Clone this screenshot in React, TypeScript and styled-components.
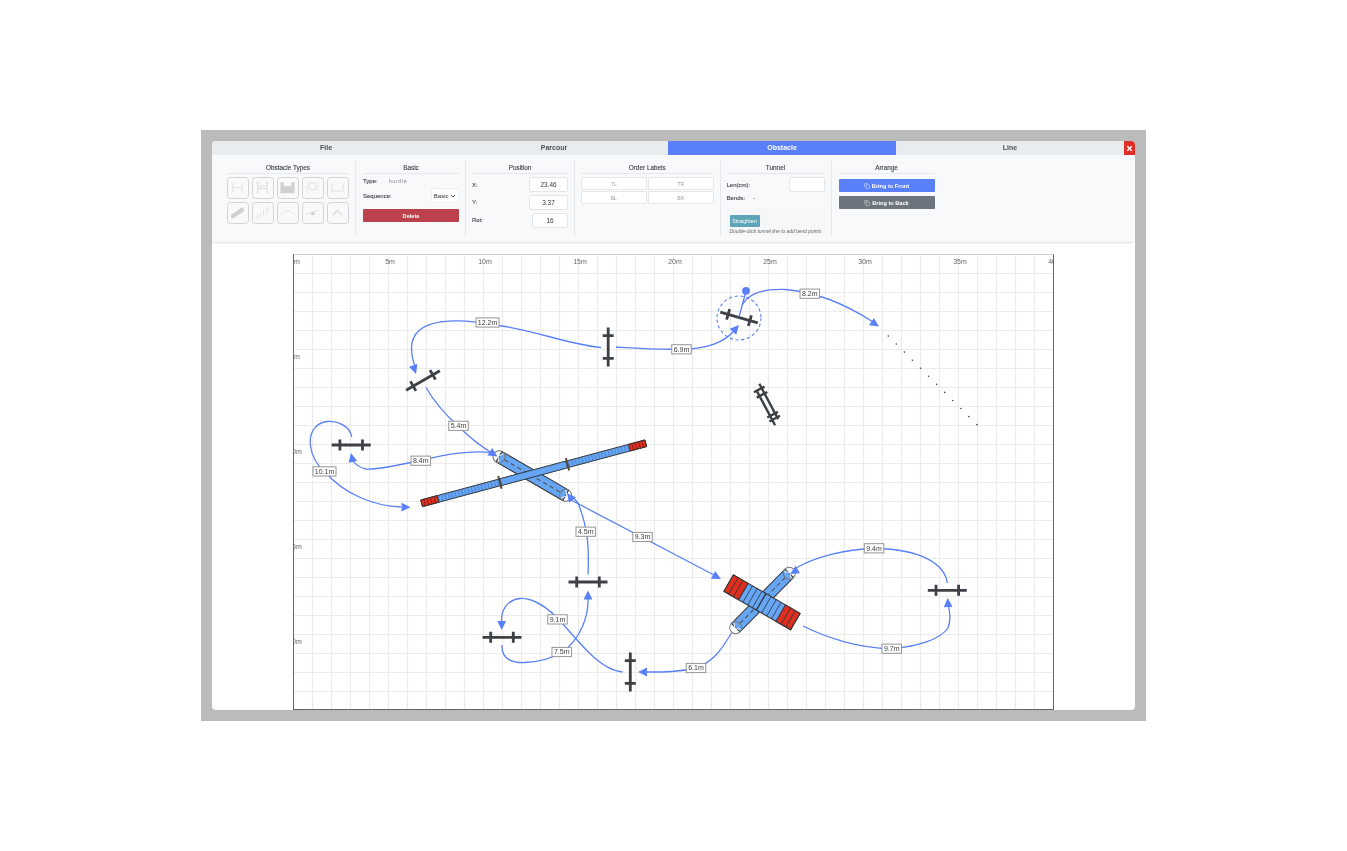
import React from "react";
import styled, { createGlobalStyle } from "styled-components";
import { Copy } from "lucide-react";

const Global = createGlobalStyle`
  html, body { margin: 0; padding: 0; height: 100%; background: #fff; }
  body { font-family: "Liberation Sans", Arial, sans-serif; }
  #root { height: 100%; }
`;

const Page = styled.div`
  height: 851px;
  display: flex;
  align-items: center;
  justify-content: center;
`;
const Backdrop = styled.div`
  width: 945px;
  height: 591px;
  box-sizing: border-box;
  padding: 11px;
  background: #bbbbbb;
  filter: blur(0.35px);
`;
const Panel = styled.div`
  height: 569px;
  background: #fff;
  border-radius: 4px;
  overflow: hidden;
  display: flex;
  flex-direction: column;
  align-items: center;
`;
const TabBar = styled.div`
  align-self: stretch;
  height: 14px;
  display: flex;
  background: #e9ecef;
`;
const Tab = styled.div<{ $active?: boolean }>`
  flex: 1;
  display: flex;
  align-items: center;
  justify-content: center;
  padding-bottom: 1px;
  font-size: 7px;
  font-weight: 700;
  color: ${(p) => (p.$active ? "#fff" : "#495057")};
  background: ${(p) => (p.$active ? "#5a7ffa" : "transparent")};
`;
const Close = styled.div`
  width: 11px;
  display: flex;
  align-items: center;
  justify-content: center;
  background: #dc3028;
`;
const Toolbar = styled.div`
  align-self: stretch;
  box-sizing: border-box;
  height: 88px;
  padding: 5px 0 6px 9px;
  display: flex;
  background: #f8f9fa;
  border-bottom: 1px solid #e4e6e9;
  box-shadow: 0 1px 1px rgba(0, 0, 0, 0.04);
  border-radius: 0 0 4px 4px;
`;
const Section = styled.div<{ $w: number; $pl?: number; $last?: boolean }>`
  width: ${(p) => p.$w}px;
  padding: 0 6px 0 ${(p) => p.$pl ?? 6}px;
  border-right: ${(p) => (p.$last ? "none" : "1px solid #e6e8eb")};
  display: flex;
  flex-direction: column;
`;
const Title = styled.div`
  font-size: 6.4px;
  line-height: 8px;
  color: #3c4248;
  text-align: center;
  padding: 4px 0 1px;
  border-bottom: 1px solid #e6e8eb;
  margin: 0 0 3px;
  -webkit-text-stroke: 0.12px #3c4248;
`;
const TypeGrid = styled.div`
  display: grid;
  grid-template-columns: repeat(5, 21.8px);
  gap: 3.4px 3.2px;
`;
const TypeButton = styled.div`
  height: 21.6px;
  box-sizing: border-box;
  border: 1px solid #d2d4d6;
  border-radius: 3.5px;
  display: flex;
  align-items: center;
  justify-content: center;
`;
const Row = styled.div<{ $h?: number; $mb?: number }>`
  display: flex;
  align-items: center;
  justify-content: space-between;
  height: ${(p) => p.$h ?? 15}px;
  margin-bottom: ${(p) => p.$mb ?? 0}px;
`;
const Key = styled.span`
  font-size: 6px;
  color: #3c4248;
  -webkit-text-stroke: 0.1px #3c4248;
`;
const TypeValue = styled.span`
  font-family: "DejaVu Sans", sans-serif;
  font-size: 5.2px;
  letter-spacing: 0.3px;
  color: #80858a;
  margin-left: 11px;
  flex: 1;
`;
const Select = styled.div`
  width: 28px;
  height: 15px;
  box-sizing: border-box;
  background: #fff;
  border: 1px solid #eceef0;
  border-radius: 2px;
  display: flex;
  align-items: center;
  justify-content: flex-end;
  gap: 1.5px;
  padding-right: 2px;
  font-size: 6px;
  color: #333;
`;
const Danger = styled.div`
  height: 13px;
  margin-top: 6px;
  display: flex;
  align-items: center;
  justify-content: center;
  background: #bc414c;
  border-radius: 1px;
  color: #fff;
  font-size: 5.6px;
  font-weight: 700;
`;
const ValueInput = styled.div<{ $w?: number }>`
  width: ${(p) => p.$w ?? 39}px;
  height: 15px;
  box-sizing: border-box;
  background: #fff;
  border: 1px solid #e3e5e8;
  border-radius: 2px;
  display: flex;
  align-items: center;
  justify-content: center;
  font-size: 6.4px;
  color: #333;
`;
const OrderGrid = styled.div`
  display: grid;
  grid-template-columns: 1fr 1fr;
  gap: 1.4px;
`;
const OrderButton = styled.div`
  height: 13px;
  box-sizing: border-box;
  background: #fff;
  border: 1px solid #e5e7ea;
  border-radius: 1px;
  display: flex;
  align-items: center;
  justify-content: center;
  font-size: 5px;
  color: #9a9ea3;
`;
const BendValue = styled.span`
  font-size: 6px;
  color: #555;
  margin-left: 8px;
  flex: 1;
`;
const SubBox = styled.div`
  margin-top: 4px;
  height: 29px;
  box-sizing: border-box;
  padding: 7.5px 3px 0;
  background: #f6f7f9;
`;
const Teal = styled.div`
  width: 30px;
  height: 11.5px;
  display: flex;
  align-items: center;
  justify-content: center;
  background: #5fa5b9;
  border-radius: 1px;
  color: #fff;
  font-size: 5.4px;
`;
const Hint = styled.div`
  margin-top: 2px;
  font-size: 4.9px;
  font-style: italic;
  color: #666;
  white-space: nowrap;
`;
const ArrangeButton = styled.div<{ $dark?: boolean }>`
  height: 13px;
  margin-top: ${(p) => (p.$dark ? 4 : 2)}px;
  display: flex;
  align-items: center;
  justify-content: center;
  gap: 2px;
  background: ${(p) => (p.$dark ? "#6c757d" : "#5a7ffa")};
  border-radius: 1px;
  color: #fff;
  font-size: 5.6px;
  font-weight: 700;
`;
const CanvasBox = styled.div`
  width: 761px;
  height: 456px;
  margin-top: 11px;
  flex: none;
  box-sizing: border-box;
  border: 1px solid #666;
  border-top-color: #ccc;
  position: relative;
  overflow: hidden;
`;
const Stage = styled.svg`
  position: absolute;
  left: -1px;
  top: -1px;
  display: block;
`;

const ICON = "#dcdddf";
const typeIcons: React.ReactNode[] = [
  <g stroke={ICON} strokeWidth="0.9" fill="none"><path d="M3 3v10M13 3v10M3 8h10" /></g>,
  <g stroke={ICON} strokeWidth="1.1" fill="none"><path d="M3 2.5v11M13 2.5v11M3 6.5h10M3 9h10" /><path d="M1.6 2.8h2.8M11.6 2.8h2.8M1.6 13h2.8M11.6 13h2.8" /></g>,
  <g fill="#cfd0d1"><path d="M0.5 2.5h3.4v4.2h8.2V2.5h3.4V14H0.5z" /></g>,
  <g stroke={ICON} strokeWidth="0.9" fill="none"><circle cx="8" cy="7" r="3.9" /><path d="M2.5 2v12M13.5 2v12" strokeDasharray="2 1.4" /></g>,
  <g stroke={ICON} strokeWidth="0.9" fill="none"><path d="M2 3.5v8.5h12V3.5" /></g>,
  <g stroke="#cfd0d1" strokeWidth="4.6" strokeLinecap="round" fill="none"><path d="M3.2 11.8 12.8 5.2" /></g>,
  <g stroke={ICON} strokeWidth="0.8" fill="none"><path d="M3 15V10M6 13.5V8M9 11.5V5.5M12 9.5V3M14.5 7.5V1" /></g>,
  <g stroke={ICON} strokeWidth="0.9" fill="none"><path d="M0.8 10.8 3.5 8M5 6.6Q8 5.4 11 6.6M12.5 8l2.7 2.8" /></g>,
  <g stroke={ICON} strokeWidth="0.9" fill="none"><path d="M1.5 9.6 14.5 5.8" /><path d="M6.6 8.2 10 7.5v3.2H6.6z" fill="#cbcccd" stroke="none" /></g>,
  <g stroke={ICON} strokeWidth="1.6" fill="none"><path d="M3 11 8 5.8l5 5.2" /></g>,
];

const BLUE = "#5a80f8";
const INK = "#3d4145";
const TUBE = "#66a6f4";

const Hurdle = ({ x, y, r = 0 }: { x: number; y: number; r?: number }) => (
  <g transform={`translate(${x} ${y}) rotate(${r})`} stroke={INK} strokeWidth="2.8" fill="none">
    <path d="M-19.5 0H19.5" />
    <path d="M-11.3 -5.5V5.5M11.3 -5.5V5.5" />
  </g>
);

const Oxer = ({ x, y, r }: { x: number; y: number; r: number }) => (
  <g transform={`translate(${x} ${y}) rotate(${r})`} stroke={INK} strokeWidth="2.4" fill="none">
    <path d="M-22 -2.8H18M-18 2.8H22" />
    <path d="M-17 -6V6M-11 -6V6M11.5 -6V6M16 -6V6" />
  </g>
);

const Tube = ({ x1, y1, x2, y2 }: { x1: number; y1: number; x2: number; y2: number }) => {
  const len = Math.hypot(x2 - x1, y2 - y1);
  const a = (Math.atan2(y2 - y1, x2 - x1) * 180) / Math.PI;
  return (
    <g transform={`translate(${x1} ${y1}) rotate(${a})`}>
      <circle r="6" fill="#fff" />
      <circle cx={len} r="6" fill="#fff" />
      <rect x="0" y="-6" width={len} height="12" fill={TUBE} stroke="#333" strokeWidth="1" />
      <path d="M-1 0 3 -5.5M-1 0 3 5.5" stroke="#fff" strokeWidth="0.8" />
      <path d={`M${len + 1} 0 ${len - 3} -5.5M${len + 1} 0 ${len - 3} 5.5`} stroke="#fff" strokeWidth="0.8" />
      <path d={`M6 0H${len - 6}`} stroke="#555" strokeWidth="1.1" strokeDasharray="4.5 3" />
      <circle r="6" fill="none" stroke="#777" strokeWidth="1" />
      <circle cx={len} r="6" fill="none" stroke="#777" strokeWidth="1" />
    </g>
  );
};

const DogWalk = () => {
  const hatch: number[] = [];
  for (let v = 18; v < 82; v += 3.4) hatch.push(v, 232 - v);
  return (
    <g transform="translate(533.7 473.3) rotate(-15)">
      <rect x="-116" y="-3.4" width="232" height="6.8" fill={TUBE} stroke="#333" strokeWidth="0.9" />
      <rect x="-116" y="-3.4" width="17" height="6.8" fill="#dc2f1f" stroke="#333" strokeWidth="0.9" />
      <rect x="99" y="-3.4" width="17" height="6.8" fill="#dc2f1f" stroke="#333" strokeWidth="0.9" />
      {hatch.map((v, i) => (
        <path key={i} d={`M${v - 116} -3.4V3.4`} stroke="#3a6aa8" strokeWidth="0.5" />
      ))}
      <path d="M-113 -3.4V3.4M-109.5 -3.4V3.4M-106 -3.4V3.4M-102.5 -3.4V3.4M102.5 -3.4V3.4M106 -3.4V3.4M109.5 -3.4V3.4M113 -3.4V3.4" stroke="#6b1a12" strokeWidth="0.6" />
      <path d="M-35 -6.5V6.5M35 -6.5V6.5" stroke="#5a4a3e" strokeWidth="2" />
      <rect x="-34" y="-3.4" width="68" height="6.8" fill={TUBE} stroke="#333" strokeWidth="0.6" />
    </g>
  );
};

const AFrame = () => {
  const xs = [-33, -27.5, -16.5, -11, -5.5, -1, 5, 11, 16.5, 27.5, 33];
  return (
    <g transform="translate(762 602.3) rotate(30)">
      <rect x="-38.5" y="-9.5" width="77" height="19" fill={TUBE} stroke="#333" strokeWidth="1" />
      <rect x="-38.5" y="-9.5" width="17" height="19" fill="#dc2f1f" stroke="#333" strokeWidth="1" />
      <rect x="21.5" y="-9.5" width="17" height="19" fill="#dc2f1f" stroke="#333" strokeWidth="1" />
      {xs.map((v, i) => (
        <path key={i} d={`M${v} -9.5V9.5`} stroke="#26303a" strokeWidth={v === -1 ? 1.3 : 0.7} />
      ))}
    </g>
  );
};

const Arrow = ({ x, y, a }: { x: number; y: number; a: number }) => (
  <path transform={`translate(${x} ${y}) rotate(${a})`} d="M0 0-9-4.4V4.4z" fill={BLUE} />
);

const DistText = styled.text`
  font-family: "Liberation Sans", Arial, sans-serif;
  font-size: 7px;
  fill: #3c3c3c;
  text-anchor: middle;
`;
const RuleText = styled.text`
  font-family: "Liberation Sans", Arial, sans-serif;
  font-size: 7px;
  fill: #666;
  text-anchor: middle;
`;

const Dist = ({ x, y, t }: { x: number; y: number; t: string }) => {
  const w = t.length > 4 ? 23 : 19.5;
  return (
    <g>
      <rect x={x - w / 2} y={y - 4.6} width={w} height="9.2" fill="#fff" stroke="#959595" strokeWidth="1" />
      <DistText x={x} y={y + 2.4}>{t}</DistText>
    </g>
  );
};

const curves = [
  "M601 347.5C566 344 534 330 499 325.5C460 318 412 316 411.5 348C411.5 357 414 364 415.5 368",
  "M616 347C640 348.5 660 350 690 349C714 347 727 339 734 331",
  "M742 305C750 292 765 289 785 289.5C818 292 850 307 873 322",
  "M426 387.5C436 405 447 416 458 426C470 438 482 447 492 453",
  "M493 453C470 449 440 456 420 460.5C395 466 375 470 366 469C358 467 355 464 353 461",
  "M351.7 437C350 426 338 421 327 421.5C313 423 309 436 310.5 446C312 458 318 466 325 472C345 495 375 506 401 507",
  "M571 500 714 575",
  "M588 574.5C589 552 589 530 578 503C575 499 572 497 571 495",
  "M502 645C501 660 514 663 525 662.5C540 662 554 657 562 652C580 640 589 616 588 598",
  "M622.5 672C600 670 580 643 562 623C545 604 530 598 520 598.5C507 600 501 610 501.5 622",
  "M731.5 633C722 648 716 660 696 668C680 672 664 672 647 672",
  "M947.3 583C945 566 925 549 874 548.5C845 549 815 557 796 568",
  "M803 626C825 637 860 649 892 648.5C915 647 940 640 948 628C951 620 950 614 948.5 606",
];
const dists: [number, number, string][] = [
  [487.5, 322.5, "12.2m"],
  [681.5, 349.3, "6.9m"],
  [809.8, 293.7, "8.2m"],
  [458.5, 425.8, "5.4m"],
  [420.8, 460.7, "8.4m"],
  [324.5, 471.4, "10.1m"],
  [642.5, 537, "9.3m"],
  [585.7, 531.7, "4.5m"],
  [561.7, 652, "7.5m"],
  [557.5, 619.4, "9.1m"],
  [696, 668, "6.1m"],
  [874, 548.3, "9.4m"],
  [891.7, 648.7, "9.7m"],
];
const arrows: [number, number, number][] = [
  [416, 374, 72],
  [739, 325, -48],
  [879, 326.5, 33],
  [497.5, 456.5, 32],
  [351, 453, -102],
  [410.5, 507.3, 1],
  [721, 579, 28],
  [567, 493, -128],
  [588, 590.5, -90],
  [501.7, 630, 90],
  [638, 672, 180],
  [790, 574, 150],
  [947.7, 598, -93],
];

const dots = Array.from({ length: 12 }, (_, i) => [888.3 + i * 8.06, 336 + i * 8.06]);
const vLines = Array.from({ length: 41 }, (_, i) => 293 + i * 19);
const hLines = Array.from({ length: 25 }, (_, i) => 254 + i * 19);

const Course = () => (
  <Stage width="761" height="456" viewBox="293 254 761 456">
    {vLines.map((x) => <path key={x} d={`M${x + 0.5} 254V710`} stroke="#ebebeb" strokeWidth="1.2" />)}
    {hLines.map((y) => <path key={y} d={`M293 ${y + 0.5}H1054`} stroke="#ebebeb" strokeWidth="1.2" />)}
    {[0, 5, 10, 15, 20, 25, 30, 35, 40].map((m) => (
      <RuleText key={m} x={295 + m * 19} y={263.5}>{m}m</RuleText>
    ))}
    {[5, 10, 15, 20].map((m) => (
      <RuleText key={m} x={295} y={263.5 + m * 19}>{m}m</RuleText>
    ))}
    <Tube x1={499} y1={456.7} x2={565.7} y2={495.3} />
    <Tube x1={735.7} y1={627.7} x2={789.3} y2={573.3} />
    <DogWalk />
    <AFrame />
    <Hurdle x={351.2} y={445} />
    <Hurdle x={423} y={380.5} r={-30} />
    <Hurdle x={608.2} y={347} r={90} />
    <Hurdle x={502} y={637.3} />
    <Hurdle x={588} y={582} />
    <Hurdle x={630.3} y={672} r={90} />
    <Hurdle x={947.3} y={590.3} />
    <Hurdle x={739} y={317.5} r={16} />
    <Oxer x={767.2} y={404.5} r={62} />
    <circle cx="739" cy="318" r="22" fill="none" stroke={BLUE} strokeWidth="1.1" strokeDasharray="3.2 2.6" />
    <path d="M739 317 746 291" stroke={BLUE} strokeWidth="1.3" />
    <circle cx="746" cy="290.8" r="3.9" fill={BLUE} />
    {curves.map((d, i) => <path key={i} d={d} fill="none" stroke={BLUE} strokeWidth="1.3" />)}
    {arrows.map(([x, y, a], i) => <Arrow key={i} x={x} y={y} a={a} />)}
    {dists.map(([x, y, t]) => <Dist key={t} x={x} y={y} t={t} />)}
    {dots.map(([x, y], i) => <circle key={i} cx={x} cy={y} r="0.8" fill="#444" />)}
  </Stage>
);

export default function App() {
  return (
    <Page>
      <Global />
      <Backdrop>
        <Panel>
          <TabBar>
            <Tab>File</Tab>
            <Tab>Parcour</Tab>
            <Tab $active>Obstacle</Tab>
            <Tab>Line</Tab>
            <Close>
              <svg width="9" height="9" viewBox="0 0 9 9">
                <path d="M2.3 2.3 6.7 6.7M6.7 2.3 2.3 6.7" stroke="#fff" strokeWidth="1.5" />
              </svg>
            </Close>
          </TabBar>
          <Toolbar>
            <Section $w={122}>
              <Title>Obstacle Types</Title>
              <TypeGrid>
                {typeIcons.map((ic, i) => (
                  <TypeButton key={i}>
                    <svg width="15" height="15" viewBox="0 0 16 16">{ic}</svg>
                  </TypeButton>
                ))}
              </TypeGrid>
            </Section>
            <Section $w={96} $pl={7}>
              <Title>Basic</Title>
              <Row $h={8} $mb={3}>
                <Key>Type:</Key>
                <TypeValue>hurdle</TypeValue>
              </Row>
              <Row>
                <Key>Sequence:</Key>
                <Select>
                  Basic
                  <svg width="6" height="6" viewBox="0 0 6 6">
                    <path d="M1 2 3 4 5 2" fill="none" stroke="#333" strokeWidth="0.8" />
                  </svg>
                </Select>
              </Row>
              <Danger>Delete</Danger>
            </Section>
            <Section $w={96}>
              <Title>Position</Title>
              <Row $mb={2.5}>
                <Key>X:</Key>
                <ValueInput>23.46</ValueInput>
              </Row>
              <Row $mb={3}>
                <Key>Y:</Key>
                <ValueInput>3.37</ValueInput>
              </Row>
              <Row>
                <Key>Rot:</Key>
                <ValueInput $w={36}>16</ValueInput>
              </Row>
            </Section>
            <Section $w={132.5}>
              <Title>Order Labels</Title>
              <OrderGrid>
                <OrderButton>TL</OrderButton>
                <OrderButton>TR</OrderButton>
                <OrderButton>BL</OrderButton>
                <OrderButton>BR</OrderButton>
              </OrderGrid>
            </Section>
            <Section $w={98}>
              <Title>Tunnel</Title>
              <Row>
                <Key>Len(cm):</Key>
                <ValueInput $w={36} />
              </Row>
              <Row $h={12}>
                <Key>Bends:</Key>
                <BendValue>-</BendValue>
              </Row>
              <SubBox>
                <Teal>Straighten</Teal>
                <Hint>Double-click tunnel line to add bend points</Hint>
              </SubBox>
            </Section>
            <Section $w={96} $pl={7} $last>
              <Title>Arrange</Title>
              <ArrangeButton>
                <Copy size={6} strokeWidth={1.5} />
                Bring to Front
              </ArrangeButton>
              <ArrangeButton $dark>
                <Copy size={6} strokeWidth={1.5} />
                Bring to Back
              </ArrangeButton>
            </Section>
          </Toolbar>
          <CanvasBox>
            <Course />
          </CanvasBox>
        </Panel>
      </Backdrop>
    </Page>
  );
}
